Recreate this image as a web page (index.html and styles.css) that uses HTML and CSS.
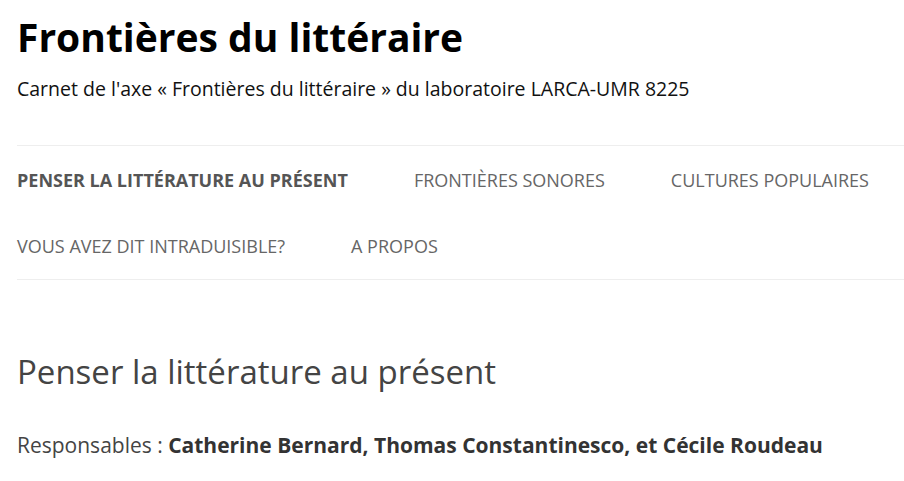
FILE: index.html
```html
<!DOCTYPE html>
<html lang="fr">
<head>
    <meta charset="UTF-8">
    <meta name="viewport" content="width=device-width, initial-scale=1.0">
    <title>Frontières du littéraire</title>
    <link rel="stylesheet" href="styles.css">
</head>
<body>
    <header class="site-header">
        <h1 class="site-title">Frontières du littéraire</h1>
        <p class="site-description">Carnet de l'axe « Frontières du littéraire » du laboratoire LARCA-UMR 8225</p>
    </header>

    <nav class="main-nav">
        <ul>
            <li class="current"><a href="#">Penser la littérature au présent</a></li>
            <li><a href="#">Frontières sonores</a></li>
            <li><a href="#">Cultures populaires</a></li>
            <li><a href="#">Vous avez dit intraduisible?</a></li>
            <li><a href="#">A propos</a></li>
        </ul>
    </nav>

    <main class="content">
        <h2 class="page-title">Penser la littérature au présent</h2>
        <p class="leads">Responsables : <strong>Catherine Bernard, Thomas Constantinesco, et Cécile Roudeau</strong></p>
    </main>
</body>
</html>
```

FILE: styles.css
```css
body, html {
    margin: 0;
    padding: 0;
    overflow: hidden;
}
body {
    font-family: "Open Sans", "Liberation Sans", sans-serif;
    color: #444;
    padding-left: 17px;
}
.site-header {
    padding-top: 12px;
}
.site-title {
    margin: 0;
    font-size: 39px;
    font-weight: 700;
    color: #000;
    line-height: 50px;
}
.site-description {
    margin: 14px 0 0;
    font-size: 19.5px;
    color: #111;
    line-height: 26px;
}
.main-nav {
    margin-top: 43px;
    border-top: 1px solid #eee;
    border-bottom: 1px solid #eee;
}
.main-nav ul {
    list-style: none;
    margin: 0;
    padding: 0 0 1px;
    display: flex;
    flex-wrap: wrap;
    column-gap: 66px;
}
.main-nav li {
    padding: 22px 0 19px;
    line-height: 24px;
}
.main-nav a {
    font-size: 18px;
    text-transform: uppercase;
    text-decoration: none;
    color: #666;
}
.main-nav .current a {
    font-weight: 700;
    color: #555;
}
.page-title {
    margin: 70px 0 0;
    font-size: 33px;
    font-weight: 400;
    line-height: 44px;
    color: #444;
}
.leads {
    margin: 37px 0 0;
    font-size: 21px;
    line-height: 28px;
    color: #444;
}
.leads strong {
    color: #333;
}
```
